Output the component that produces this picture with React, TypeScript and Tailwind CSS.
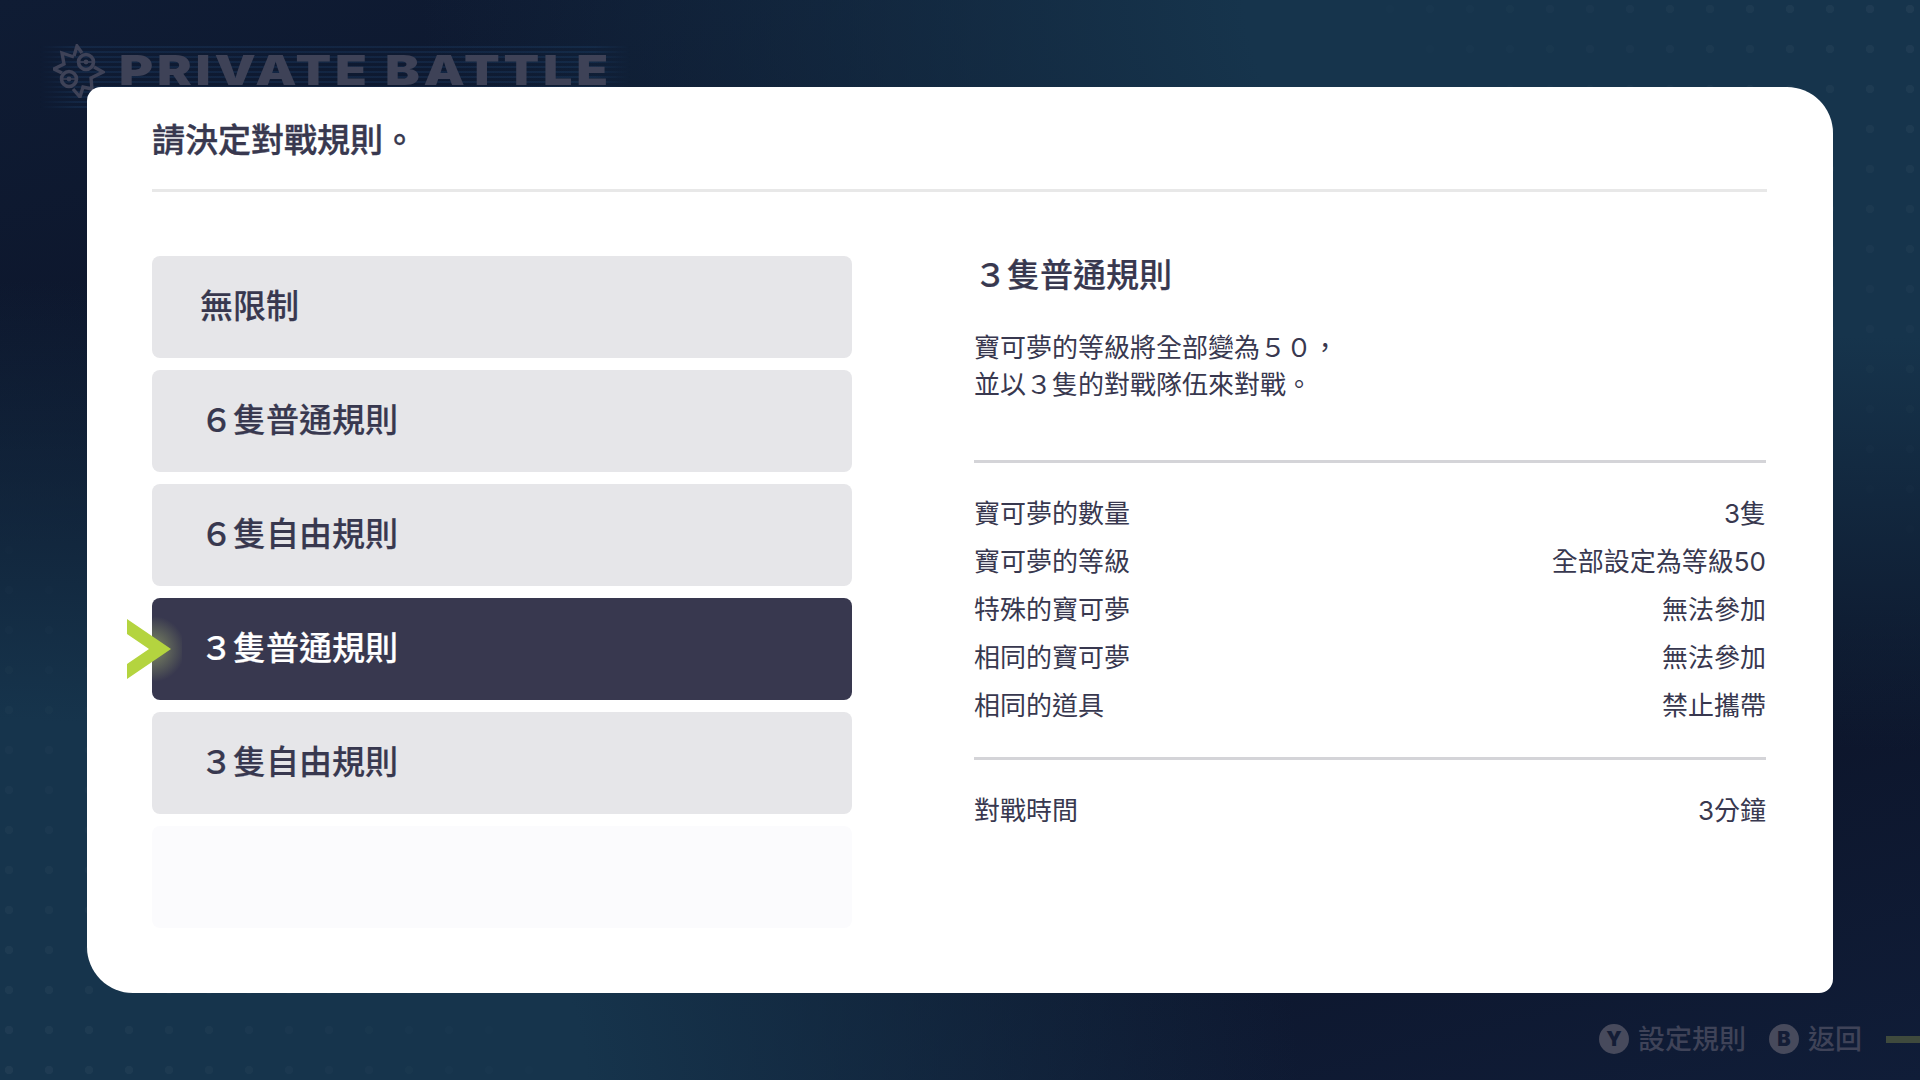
import React from 'react';

const RULES = [
  { name: '無限制', state: 'idle' },
  { name: '６隻普通規則', state: 'idle' },
  { name: '６隻自由規則', state: 'idle' },
  { name: '３隻普通規則', state: 'active' },
  { name: '３隻自由規則', state: 'idle' },
  { name: '', state: 'empty' },
];

const DETAILS = [
  ['寶可夢的數量', '3隻'],
  ['寶可夢的等級', '全部設定為等級50'],
  ['特殊的寶可夢', '無法參加'],
  ['相同的寶可夢', '無法參加'],
  ['相同的道具', '禁止攜帶'],
];

function BattleLogo() {
  return (
    <svg width="52" height="54" viewBox="0 0 52 54" fill="none" stroke="#3e4257" strokeWidth="3.4" strokeLinejoin="miter">
      {/* star outline, broken by the two balls */}
      <path d="M21 12 L24 2 L29 9" />
      <path d="M21 13 L9 9 L11 20 L1 25 L9 29" />
      <path d="M20 45 L27 53 L30 43 L39 45 L38 34 L50 28 L41 23" />
      <circle cx="33" cy="18" r="7.5" strokeWidth="3.6" />
      <circle cx="33" cy="18" r="2.4" fill="#3e4257" stroke="none" />
      <circle cx="16" cy="35" r="7.5" strokeWidth="3.6" />
      <circle cx="16" cy="35" r="2.4" fill="#3e4257" stroke="none" />
      <path d="M24 18 H42 M7 35 H25" strokeWidth="1.6" />
    </svg>
  );
}

function PadButton({ letter, label }: { letter: string; label: string }) {
  return (
    <div className="flex items-center gap-[9px]">
      <div className="w-[30px] h-[30px] rounded-full bg-[#474a5c] flex items-center justify-center text-[20px] font-black leading-none text-[#141d36]">
        {letter}
      </div>
      <span className="text-[27px] font-medium leading-none text-[#3f4358]">{label}</span>
    </div>
  );
}

export default function App() {
  return (
    <div className="relative w-[1920px] h-[1080px] overflow-hidden flex flex-col bg-[#0c1429] font-['Inter','Noto_Sans_CJK_TC',sans-serif] text-[#38384f]">
      {/* background glow + dot grid */}
      <div className="absolute inset-0 bg-[radial-gradient(ellipse_1300px_800px_at_0px_1080px,#16344c_45%,transparent_100%),radial-gradient(ellipse_1500px_750px_at_1920px_0px,#16344c_45%,transparent_100%),linear-gradient(165deg,#0f1c34_0%,#0c1429_35%,#0c1429_70%,#101d38_100%)]" />
      <div className="absolute inset-0 bg-[radial-gradient(circle_at_9px_30px,rgba(255,255,255,0.045)_4px,transparent_4.5px)] bg-[length:40px_40px] [mask-image:linear-gradient(45deg,black_0%,transparent_22%)]" />
      <div className="absolute inset-0 bg-[radial-gradient(circle_at_30px_9px,rgba(255,255,255,0.045)_4px,transparent_4.5px)] bg-[length:40px_40px] [mask-image:linear-gradient(225deg,black_0%,transparent_22%)]" />

      {/* header, the card overlaps its lower edge */}
      <header className="relative h-[87px] shrink-0 flex items-start pl-[53px] pt-[44px] gap-[14px]">
        <div className="absolute left-[40px] top-[46px] w-[590px] h-[62px] bg-[repeating-linear-gradient(180deg,rgba(50,120,190,0.13)_0px,rgba(50,120,190,0.13)_2px,transparent_2px,transparent_5px)] [mask-image:linear-gradient(90deg,transparent,black_6%,black_94%,transparent)]" />
        <div className="relative shrink-0">
          <BattleLogo />
        </div>
        <div className="relative mt-[3px] font-['Inter',sans-serif] font-black text-[41px] leading-[46px] tracking-[3px] whitespace-nowrap origin-left scale-x-[1.27] text-[#3e4257]">
          PRIVATE BATTLE
        </div>
      </header>

      {/* main card */}
      <main className="relative ml-[87px] w-[1746px] h-[906px] shrink-0 bg-white rounded-tl-[14px] rounded-tr-[46px] rounded-br-[14px] rounded-bl-[46px] pl-[65px] pr-[66px] flex flex-col">
        <div className="h-[105px] shrink-0 border-b-[3px] border-[#e8e8e8] pt-[29px]">
          <h1 className="text-[33px] font-medium leading-[48px] [-webkit-text-stroke:0.4px_#38384f]">請決定對戰規則。</h1>
        </div>

        <div className="flex mt-[64px] gap-[122px]">
          <ul className="w-[700px] shrink-0 flex flex-col gap-[12px]">
            {RULES.map((rule, i) => (
              <li
                key={i}
                className={`relative h-[102px] rounded-[8px] flex items-center pl-[48px] text-[33px] font-medium [-webkit-text-stroke:0.2px_currentColor] ${
                  rule.state === 'active'
                    ? 'bg-[#38384f] text-white'
                    : rule.state === 'empty'
                      ? 'bg-[#fbfbfd]'
                      : 'bg-[#e6e6e9]'
                }`}
              >
                {rule.name}
                {rule.state === 'active' && (
                  <>
                    <div className="absolute left-0 top-[16px] w-[30px] h-[70px] rounded-l-[8px] bg-[radial-gradient(circle_at_0px_35px,rgba(200,220,120,0.5)_0%,transparent_72%)]" />
                    <svg className="absolute left-[-25px] top-[21px]" width="44" height="60" viewBox="0 0 44 60">
                      <polygon points="0,0 44,30 0,60 0,45 22,30 0,15" fill="#b4d43f" />
                    </svg>
                  </>
                )}
              </li>
            ))}
          </ul>

          <section className="w-[792px] shrink-0">
            <h2 className="mt-[2px] text-[33px] font-medium leading-[34px] [-webkit-text-stroke:0.2px_#38384f]">３隻普通規則</h2>
            <p className="mt-[37px] text-[26px] leading-[37px]">
              寶可夢的等級將全部變為５０，
              <br />
              並以３隻的對戰隊伍來對戰。
            </p>
            <div className="mt-[57px] h-[3px] bg-[#d4d4d8]" />
            <dl className="mt-[26px] text-[26px]">
              {DETAILS.map(([label, value]) => (
                <div key={label} className="h-[48px] flex items-center justify-between">
                  <dt>{label}</dt>
                  <dd>{value}</dd>
                </div>
              ))}
            </dl>
            <div className="mt-[28px] h-[3px] bg-[#d4d4d8]" />
            <div className="mt-[26px] h-[48px] flex items-center justify-between text-[26px]">
              <span>對戰時間</span>
              <span>3分鐘</span>
            </div>
          </section>
        </div>
      </main>

      {/* footer button hints */}
      <footer className="relative flex-1 flex items-center justify-end pt-[5px]">
        <div className="flex items-center gap-[23px]">
          <PadButton letter="Y" label="設定規則" />
          <PadButton letter="B" label="返回" />
        </div>
        <div className="ml-[24px] w-[34px] h-[7px] bg-[#3f4a3d]" />
      </footer>
    </div>
  );
}
